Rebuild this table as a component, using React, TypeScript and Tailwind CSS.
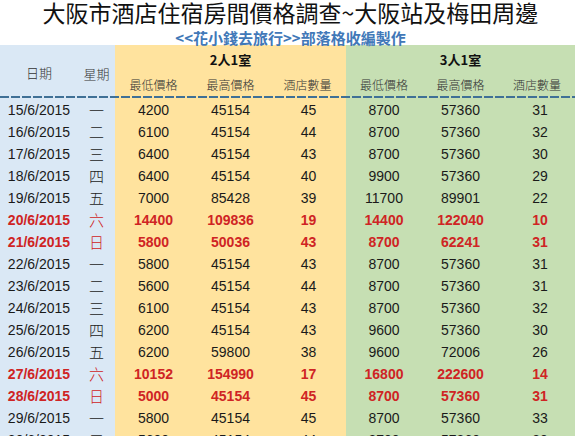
import React from "react";

type Row = {
  date: string;
  day: string;
  min2: string;
  max2: string;
  count2: string;
  min3: string;
  max3: string;
  count3: string;
  weekend?: boolean;
};

const rows: Row[] = [
  { date: "15/6/2015", day: "一", min2: "4200", max2: "45154", count2: "45", min3: "8700", max3: "57360", count3: "31" },
  { date: "16/6/2015", day: "二", min2: "6100", max2: "45154", count2: "44", min3: "8700", max3: "57360", count3: "32" },
  { date: "17/6/2015", day: "三", min2: "6400", max2: "45154", count2: "43", min3: "8700", max3: "57360", count3: "30" },
  { date: "18/6/2015", day: "四", min2: "6400", max2: "45154", count2: "40", min3: "9900", max3: "57360", count3: "29" },
  { date: "19/6/2015", day: "五", min2: "7000", max2: "85428", count2: "39", min3: "11700", max3: "89901", count3: "22" },
  { date: "20/6/2015", day: "六", min2: "14400", max2: "109836", count2: "19", min3: "14400", max3: "122040", count3: "10", weekend: true },
  { date: "21/6/2015", day: "日", min2: "5800", max2: "50036", count2: "43", min3: "8700", max3: "62241", count3: "31", weekend: true },
  { date: "22/6/2015", day: "一", min2: "5800", max2: "45154", count2: "43", min3: "8700", max3: "57360", count3: "31" },
  { date: "23/6/2015", day: "二", min2: "5600", max2: "45154", count2: "44", min3: "8700", max3: "57360", count3: "31" },
  { date: "24/6/2015", day: "三", min2: "6100", max2: "45154", count2: "43", min3: "8700", max3: "57360", count3: "32" },
  { date: "25/6/2015", day: "四", min2: "6200", max2: "45154", count2: "43", min3: "9600", max3: "57360", count3: "30" },
  { date: "26/6/2015", day: "五", min2: "6200", max2: "59800", count2: "38", min3: "9600", max3: "72006", count3: "26" },
  { date: "27/6/2015", day: "六", min2: "10152", max2: "154990", count2: "17", min3: "16800", max3: "222600", count3: "14", weekend: true },
  { date: "28/6/2015", day: "日", min2: "5000", max2: "45154", count2: "45", min3: "8700", max3: "57360", count3: "31", weekend: true },
  { date: "29/6/2015", day: "一", min2: "5800", max2: "45154", count2: "45", min3: "8700", max3: "57360", count3: "33" },
  { date: "30/6/2015", day: "二", min2: "5600", max2: "45154", count2: "44", min3: "8700", max3: "57360", count3: "30" },
];

const cols = "grid grid-cols-[78px_37px_77px_77px_77px_76px_77px_76px]";
const cjk = "font-['Noto_Sans_CJK_TC',sans-serif]";
const num = "font-['Liberation_Sans',Arial,sans-serif]";

export default function App() {
  return (
    <div className="w-[581px] h-[436px] overflow-hidden bg-white">
      {/* title block */}
      <div className={`h-[45px] flex flex-col items-center ${cjk}`}>
        <h1 className="h-[24px] text-[23px] leading-[24px] text-[#111] font-normal whitespace-nowrap">
          大阪市酒店住宿房間價格調查~大阪站及梅田周邊
        </h1>
        <div className="h-[21px] pt-[6px] text-[15px] leading-[15px] font-bold text-[#4178b8] whitespace-nowrap">
          &lt;&lt;花小錢去旅行&gt;&gt;部落格收編製作
        </div>
      </div>

      {/* table, column colours painted on the container */}
      <div className="w-[575px] bg-[linear-gradient(90deg,#dae8f5_0_115px,#ffe39e_115px_346px,#c6dfb3_346px_575px)]">
        <div className={`${cols} grid-rows-[25px_26px] ${cjk}`}>
          <div className="row-span-2 flex items-center justify-center pt-[4px] text-[13px] text-[#333] font-light">日期</div>
          <div className="row-span-2 flex items-center justify-center pt-[6px] text-[13px] text-[#333] font-light">星期</div>
          <div className="col-span-3 flex items-end justify-center pb-[1px] text-[13px] font-bold text-[#111]">2人1室</div>
          <div className="col-span-3 flex items-end justify-center pb-[1px] text-[13px] font-bold text-[#111]">3人1室</div>
          {["最低價格", "最高價格", "酒店數量", "最低價格", "最高價格", "酒店數量"].map((h, i) => (
            <div key={i} className="flex items-center justify-center pt-[4px] text-[12px] text-[#333] font-light">
              {h}
            </div>
          ))}
        </div>

        <div className="h-[2px] bg-[repeating-linear-gradient(90deg,#3f7096_0_9px,transparent_9px_11px)]" />

        <div className="pt-[1px]">
          {rows.map((r) => {
            const tone = r.weekend ? "text-[#cf2424] font-bold" : "text-[#1a1a1a]";
            return (
              <div key={r.date} className={`${cols} h-[22px] items-center text-[14px] leading-[22px]`}>
                <div className={`${num} ${tone} text-center`}>{r.date}</div>
                <div className={`${cjk} text-center text-[15px] font-light ${r.weekend ? "text-[#cf2424]" : "text-[#222]"}`}>{r.day}</div>
                <div className={`${num} ${tone} text-center`}>{r.min2}</div>
                <div className={`${num} ${tone} text-center`}>{r.max2}</div>
                <div className={`${num} ${tone} text-center pl-[2px]`}>{r.count2}</div>
                <div className={`${num} ${tone} text-center`}>{r.min3}</div>
                <div className={`${num} ${tone} text-center`}>{r.max3}</div>
                <div className={`${num} ${tone} text-center pl-[6px]`}>{r.count3}</div>
              </div>
            );
          })}
        </div>
      </div>
    </div>
  );
}
